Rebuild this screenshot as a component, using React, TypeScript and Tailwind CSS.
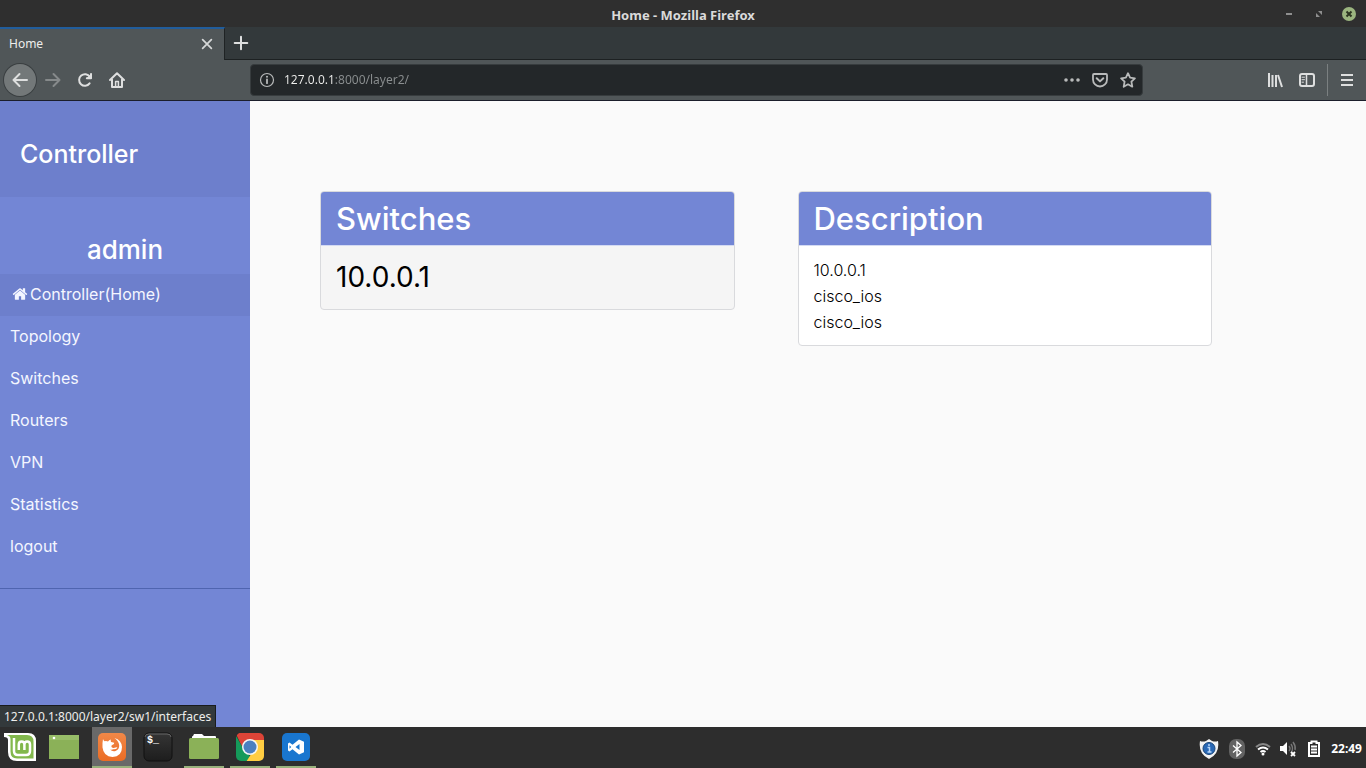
import type { ReactNode } from "react";

const navItems = ["Topology", "Switches", "Routers", "VPN", "Statistics", "logout"];

function Stroke({ children, size = 16, width = 2 }: { children: ReactNode; size?: number; width?: number }) {
  return (
    <svg
      width={size}
      height={size}
      viewBox="0 0 16 16"
      fill="none"
      stroke="currentColor"
      strokeWidth={width}
      strokeLinecap="round"
      strokeLinejoin="round"
      aria-hidden="true"
    >
      {children}
    </svg>
  );
}

function TitleBar() {
  return (
    <header className="grid h-[27px] grid-cols-3 items-center bg-[#2f2f2f] px-2.5">
      <h1 className="col-start-2 pt-0.5 text-center text-[13px] leading-5 font-bold text-[#dadada]">Home - Mozilla Firefox</h1>
      <div className="flex justify-end gap-4 text-[#8f8f8f]">
        <button aria-label="Minimize" className="flex h-4 w-3.5 items-center justify-center">
          <svg width="14" height="14" viewBox="0 0 14 14"><path d="M4 7h6" stroke="currentColor" strokeWidth="2" /></svg>
        </button>
        <button aria-label="Restore" className="flex h-4 w-3.5 items-center justify-center">
          <svg width="14" height="14" viewBox="0 0 14 14" fill="currentColor"><path d="M6 4h4v4zM4 6v4h4z" /></svg>
        </button>
        <button aria-label="Close" className="flex h-4 w-3.5 items-center justify-center">
          <svg width="14" height="14" viewBox="0 0 14 14">
            <circle cx="7" cy="7" r="7" fill="#9bb57f" />
            <path d="M4.500 4.500l5 5m0-5l-5 5" stroke="#2b3420" strokeWidth="2" />
          </svg>
        </button>
      </div>
    </header>
  );
}

function TabStrip() {
  return (
    <div className="flex h-[33px] items-stretch bg-[#33393b]">
      <div className="flex w-[225px] items-center justify-between border-t-2 border-r border-t-[#215d9c] border-r-[#1f2324] bg-[#505658] pr-2.5 pb-px pl-[9px]">
        <span className="text-[12px] leading-4 text-[#eeeeec]">Home</span>
        <button aria-label="Close tab" className="text-[#d6d8d8]">
          <Stroke size={14}><path d="M3 3l10 10M13 3L3 13" /></Stroke>
        </button>
      </div>
      <div className="flex flex-1 items-center border-b border-[#1d2122] pl-2">
        <button aria-label="New tab" className="text-[#dedfdf]">
          <Stroke><path d="M8 1.700v12.600M1.700 8h12.600" /></Stroke>
        </button>
      </div>
    </div>
  );
}

function Toolbar() {
  return (
    <div className="flex h-[41px] items-center border-b border-[#1b1e2b] bg-[#505658] text-[#dedfdf]">
      <div className="flex w-[250px] items-center pl-1">
        <button aria-label="Back" className="flex size-8 items-center justify-center rounded-full bg-[#737879] ring-1 ring-[#3a3f41]">
          <Stroke><path d="M15 8H1.500M7.500 2L1.500 8l6 6" /></Stroke>
        </button>
        <button aria-label="Forward" disabled className="flex size-8 items-center justify-center pl-0.5 text-[#868a8b]">
          <Stroke><path d="M1 8h13.500M8.500 2l6 6-6 6" /></Stroke>
        </button>
        <button aria-label="Reload" className="flex size-8 items-center justify-center pl-0.5">
          <Stroke>
            <path d="M12.600 11.400A5.800 5.800 0 1 1 12.800 4.800" />
            <path d="M14.600 1.200v5.600H9z" fill="currentColor" stroke="none" />
            <path d="M14 2v4.200H9.800" />
          </Stroke>
        </button>
        <button aria-label="Home" className="flex size-8 items-center justify-center pl-0.5">
          <Stroke>
            <path d="M1 8l7-6.800L15 8M3 7.500V15h10V7.500" />
            <path d="M6.600 15V9.400h2.800V15" strokeWidth="1.500" />
          </Stroke>
        </button>
      </div>
      <div className="flex h-8 flex-1 items-center rounded-[4px] border border-[#373c3e] bg-[#232729] px-2 text-[#b8baba]">
        <Stroke width={1.2}>
          <circle cx="8" cy="8" r="6.500" />
          <path d="M8 7.500v3.700" strokeWidth="1.800" />
          <circle cx="8" cy="4.800" r="1" fill="currentColor" stroke="none" />
        </Stroke>
        <input
          type="text"
          aria-label="Address"
          defaultValue="127.0.0.1:8000/layer2/"
          className="ml-[9px] min-w-0 flex-1 bg-[linear-gradient(to_right,#f0f0ee_50px,#8b8f90_50px)] bg-clip-text text-[12px] leading-4 text-transparent outline-none"
        />
        <div className="flex items-center gap-3">
          <button aria-label="Page actions">
            <svg width="16" height="16" viewBox="0 0 16 16" fill="currentColor"><circle cx="2" cy="8" r="1.800" /><circle cx="8" cy="8" r="1.800" /><circle cx="14" cy="8" r="1.800" /></svg>
          </button>
          <button aria-label="Save to Pocket">
            <Stroke><path d="M2 2h12a1 1 0 0 1 1 1v4.500a7 7 0 0 1-14 0V3a1 1 0 0 1 1-1z" strokeWidth="1.800" /><path d="M4.700 6.200L8 9.400l3.300-3.200" /></Stroke>
          </button>
          <button aria-label="Bookmark this page" className="-mr-0.5">
            <Stroke width={1.8}><path d="M8 1.200l2.100 4.500 4.800.6-3.500 3.400.9 5L8 12.300l-4.300 2.400.9-5L1.100 6.300l4.800-.6z" /></Stroke>
          </button>
        </div>
      </div>
      <div className="flex w-[223px] items-center justify-end gap-4 pr-3">
        <button aria-label="Library">
          <svg width="16" height="16" viewBox="0 0 16 16" stroke="currentColor" strokeWidth="2" fill="none"><path d="M2 1v14M5.500 3v12M9 3v12M11 3l4 12" /></svg>
        </button>
        <button aria-label="Sidebars">
          <Stroke><rect x="1" y="2" width="14" height="12" rx="2" /><path d="M7.500 2v12" strokeWidth="1.500" /><path d="M3 5.200h2.500M3 7.700h2.500M3 10.200h1.500" strokeWidth="1" /></Stroke>
        </button>
        <div className="-ml-1 flex h-8 items-center border-l border-[#7b8081] pl-3">
          <button aria-label="Open menu">
            <svg width="14" height="16" viewBox="0 0 14 16" stroke="currentColor" strokeWidth="2"><path d="M1 3h12M1 8h12M1 13h12" /></svg>
          </button>
        </div>
      </div>
    </div>
  );
}

function Sidebar() {
  return (
    <aside className="w-[250px] shrink-0 bg-[#7386d5] text-white">
      <div className="flex h-24 items-center bg-[#6d7fcc] px-5 pt-2.5">
        <h2 className="text-[25px] leading-8 font-medium">Controller</h2>
      </div>
      <nav className="border-b border-[#4f64b0] pt-[35px] pb-5 text-[16px]" aria-label="Main">
        <p className="h-[42px] text-center text-[26px] leading-9 font-medium">admin</p>
        <a href="#home" className="flex h-[42px] items-center bg-[#6d7fcc] pb-0.5 pl-3 text-[#f4f6ff]">
          <svg width="16" height="16" viewBox="0 0 1792 1792" fill="currentColor" className="mr-0.5" aria-hidden="true">
            <path d="M1472 992v480q0 26-19 45t-45 19h-384v-384h-256v384h-384q-26 0-45-19t-19-45v-480q0-1 .5-3t.5-3l575-474 575 474q1 2 1 6zm223-69l-62 74q-8 9-21 11h-3q-13 0-21-7l-692-577-692 577q-12 8-24 7-13-2-21-11l-62-74q-8-10-7-23.500t11-21.500l719-599q32-26 76-26t76 26l244 204v-195q0-14 9-23t23-9h192q14 0 23 9t9 23v408l219 182q10 8 11 21.500t-7 23.500z" />
          </svg>
          Controller(Home)
        </a>
        <ul>
          {navItems.map((item) => (
            <li key={item}>
              <a href={`#${item.toLowerCase()}`} className="flex h-[42px] items-center px-2.5 pb-0.5 text-[#f4f6ff]">{item}</a>
            </li>
          ))}
        </ul>
      </nav>
    </aside>
  );
}

function Card({ title, children, muted = false }: { title: string; children: ReactNode; muted?: boolean }) {
  return (
    <section className={`overflow-hidden rounded border border-[#d9dadd] text-black ${muted ? "bg-[#f5f5f5]" : "bg-white"}`}>
      <h2 className="h-[54px] border-b border-[#d3daf3] bg-[#7386d5] px-[15px] text-[31px] leading-[53px] font-medium text-white">{title}</h2>
      {children}
    </section>
  );
}

function Task({ label, state = "", children }: { label: string; state?: string; children: ReactNode }) {
  return (
    <button aria-label={label} className={`flex w-10 items-center justify-center border-b-2 ${state || "border-transparent"}`}>
      {children}
    </button>
  );
}

function Taskbar() {
  return (
    <footer className="flex h-[41px] shrink-0 items-stretch justify-between bg-[#2d2d2d]">
      <div className="flex">
        <div className="mr-1 flex">
          <Task label="Menu">
            <svg width="32" height="30" viewBox="0 0 32 30">
              <path d="M0 1h24q8 0 8 8v20H13Q4 29 4 20V8Q4 5 0 5z" fill="#fff" />
              <path d="M3 3h20q6.500 0 6.500 6.500V26.500H13q-6.500 0-6.500-7V7Q6.500 4 3 3z" fill="#82b84c" />
              <path d="M10 6v13q0 4 4 4h8q4 0 4-4v-6.500q0-3-2.800-3t-2.800 3V18m0-5.500q0-3-2.800-3t-2.800 3V18" stroke="#fff" strokeWidth="2.500" fill="none" />
            </svg>
          </Task>
        </div>
        <div className="mr-2 flex">
          <Task label="Show desktop">
            <svg width="30" height="24" viewBox="0 0 30 24"><path fill="#8bb158" d="M0 0h30v24H0z" /><path fill="#98bd68" d="M0 0h30v5H0z" /><circle cx="5" cy="3" r="1.300" fill="#fff" /></svg>
          </Task>
        </div>
        <div className="flex gap-1.5">
          <Task label="Firefox" state="bg-[#696969] border-[#98b17c]">
            <svg width="30" height="30" viewBox="0 0 30 30">
              <defs><linearGradient id="fox" x2="0" y2="1"><stop stopColor="#f18848" /><stop offset="1" stopColor="#eb6c24" /></linearGradient></defs>
              <rect x="1" y="1" width="28" height="28" rx="5" fill="url(#fox)" />
              <path d="M6 7q.5 1.500 1.500 2.200 2-.7 3.500.3 1-1.500 3-2-.8 1.500.2 2.500l3 .7q.5 1.300-2 2.300-1.200.7-.7 2 1.500 1.500 4 .5 1.500-.5 2 .3-1.500 1.700-4 1.500-1.500.8-3.500.2 2.500 2.500 5.500 1.500 4-1.500 3.700-6-.7-4-4.700-7 7 2 7.500 9 0 9.500-9.500 10-9-.5-10-9.500-.2-5 .5-8.500z" fill="#fff" />
            </svg>
          </Task>
          <Task label="Terminal">
            <svg width="30" height="30" viewBox="0 0 30 30">
              <defs><linearGradient id="term" x2="0" y2="1"><stop stopColor="#353535" /><stop offset="1" stopColor="#1d1d1d" /></linearGradient></defs>
              <rect x="1" y="1" width="28" height="28" rx="5" fill="url(#term)" stroke="#111" />
              <path d="M2 5q0-3 4-3h18q4 0 4 3" stroke="#666" fill="none" />
              <text x="4" y="11" fill="#fff" fontFamily="Liberation Mono, monospace" fontWeight="700" fontSize="10">$_</text>
            </svg>
          </Task>
          <Task label="Files" state="border-[#98b17c]">
            <svg width="30" height="26" viewBox="0 0 30 26"><path d="M3 5V3q0-1 1-1l1-2h8l2 2h11q1 0 1 1v2z" fill="#fff" /><rect y="4" width="30" height="21" rx="1.500" fill="#8bb158" /></svg>
          </Task>
          <Task label="Chrome" state="border-[#98b17c]">
            <svg width="30" height="30" viewBox="0 0 30 30">
              <defs><clipPath id="tile"><rect x="1" y="1" width="28" height="28" rx="5" /></clipPath></defs>
              <g clipPath="url(#tile)">
                <path fill="#dc4437" d="M0 0h30v8H15z" />
                <path fill="#dc4437" d="M0 0h16v15l-7 4z" />
                <path fill="#159a5a" d="M0 2l9 16 6 6-3 6H0z" />
                <path fill="#ffcd42" d="M15 8h15v22H11l9-14z" />
              </g>
              <circle cx="15" cy="15" r="8" fill="#f4f6f4" /><circle cx="15" cy="15" r="6.500" fill="#4a80c0" />
            </svg>
          </Task>
          <Task label="Visual Studio Code" state="border-[#98b17c]">
            <svg width="30" height="30" viewBox="0 0 30 30">
              <rect x="1" y="1" width="28" height="28" rx="5" fill="#1976cf" />
              <path fill="#fff" fillRule="evenodd" d="M18 7.500l5 2.300v10.400L18 22.500l-6.500-5.300-3 2.300L7 18.500v-7l1.500-1 3 2.300zM18.500 12L14.500 15l4 3zM8.500 13.300v3.400l1.700-1.700z" />
            </svg>
          </Task>
        </div>
      </div>
      <div className="flex items-center gap-2 pt-0.5 pr-1 text-white">
        <svg width="20" height="20" viewBox="0 0 20 20" className="mr-0.5" role="img" aria-label="Updates">
          <path d="M10 0l3 2q3 1 6 0 2 13-9 18Q-1 15 1 2q3 1 6 0z" fill="#f2f2f2" />
          <circle cx="10" cy="9.500" r="6" fill="#2968b5" stroke="#184477" />
          <path d="M8.500 8.500h2V13m-2 0h4" stroke="#b8d7fb" strokeWidth="1.500" fill="none" /><circle cx="10" cy="6" r="1" fill="#b8d7fb" />
        </svg>
        <svg width="16" height="20" viewBox="0 0 16 20" className="mr-0.5" role="img" aria-label="Bluetooth">
          <rect width="16" height="20" rx="7" fill="#626262" />
          <path d="M4 6.500l8 7-4 3.500V3l4 3.500-8 7" stroke="#fff" strokeWidth="1.300" fill="none" />
        </svg>
        <svg width="16" height="16" viewBox="0 0 16 16" fill="none" strokeWidth="2" role="img" aria-label="Wi-Fi">
          <path d="M1 6q7-6 14 0" stroke="#888" /><path d="M3 8.500q5-4 10 0M5.500 11q2.500-2 5 0" stroke="#fff" /><circle cx="8" cy="13" r="1.500" fill="#fff" />
        </svg>
        <svg width="18" height="18" viewBox="0 0 18 18" fill="none" className="mr-0.5" role="img" aria-label="Muted">
          <path d="M1 6h3l4-4v13l-4-4H1z" fill="#fff" /><path d="M10 6q2 2.500 0 5M12 4q3 4.500 0 9M14 2q3 4 2 8" stroke="#777" strokeWidth="1.400" /><path d="M12 12l4 4m0-4l-4 4" stroke="#fff" strokeWidth="1.800" />
        </svg>
        <svg width="14" height="18" viewBox="0 0 14 18" className="mr-0.5" fill="none" stroke="#fff" role="img" aria-label="Battery">
          <path d="M4.500 3V1.500h5V3H12v13H2V3z" strokeWidth="2" /><path d="M4 6.500h6M4 9.500h6M4 12.500h6" strokeWidth="1.800" />
        </svg>
        <time className="text-[12px] leading-4 font-bold">22:49</time>
      </div>
    </footer>
  );
}

export default function App() {
  return (
    <div className="flex min-h-screen flex-col font-['Noto_Sans',sans-serif]">
      <TitleBar />
      <TabStrip />
      <Toolbar />
      <div className="relative flex flex-1 bg-[#fafafa] font-['Inter',sans-serif]">
        <Sidebar />
        <main className="grid flex-1 grid-cols-2 items-start gap-[63px] pt-[90px] pr-[154px] pb-10 pl-[70px]">
          <Card title="Switches" muted>
            <p className="h-[63px] px-[15px] text-[28px] leading-[63px]">10.0.0.1</p>
          </Card>
          <Card title="Description">
            <div className="px-[15px] pt-[11px] pb-[10px] text-[16px] leading-[26px] font-light">
              <p>10.0.0.1</p>
              <p>cisco_ios</p>
              <p>cisco_ios</p>
            </div>
          </Card>
        </main>
        <div className="absolute bottom-0 left-0 border-t border-r border-[#191c1d] bg-[#33393b] px-1 font-['Noto_Sans',sans-serif] text-[12px] leading-[21px] text-[#eeeeec]">
          127.0.0.1:8000/layer2/sw1/interfaces
        </div>
      </div>
      <Taskbar />
    </div>
  );
}
